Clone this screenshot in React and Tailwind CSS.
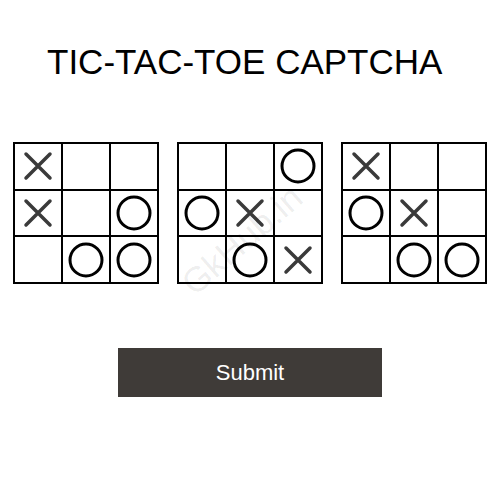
// Tic-tac-toe captcha: three boards and a submit button

const BOARDS = [
  ['x', '', '', 'x', '', 'o', '', 'o', 'o'],
  ['', '', 'o', 'o', 'x', '', '', 'o', 'x'],
  ['x', '', '', 'o', 'x', '', '', 'o', 'o'],
];

function Mark({ v }) {
  if (v === 'x') {
    return (
      <svg width="30" height="30" viewBox="0 0 30 30">
        <path d="M3 3 L27 27 M27 3 L3 27" stroke="#3a3a3a" strokeWidth="3.5" strokeLinecap="round" />
      </svg>
    );
  }
  if (v === 'o') {
    return (
      <svg width="36" height="36" viewBox="0 0 36 36">
        <circle cx="18" cy="18" r="16" fill="none" stroke="#000" strokeWidth="3" />
      </svg>
    );
  }
  return null;
}

function Board({ cells }) {
  return (
    <div className="w-[146px] h-[142px] bg-black p-[2px] grid grid-cols-3 grid-rows-3 gap-[2px]">
      {cells.map((v, i) => (
        <div key={i} className="bg-white flex items-center justify-center">
          <Mark v={v} />
        </div>
      ))}
    </div>
  );
}

export default function App() {
  return (
    <div className="relative w-[500px] h-[500px] bg-white overflow-hidden font-['Liberation_Sans',Arial,sans-serif]">
      <div className="pt-[44px] pl-[47px] text-[35px] leading-[36px] text-black">
        TIC-TAC-TOE CAPTCHA
      </div>

      <div className="mt-[62px] flex justify-center gap-[18px]">
        {BOARDS.map((b, i) => (
          <Board key={i} cells={b} />
        ))}
      </div>

      <div className="mt-[64px] flex justify-center">
        <button className="w-[264px] h-[49px] bg-[#3f3b38] text-white text-[22px] leading-none">
          Submit
        </button>
      </div>

      {/* watermark */}
      <div className="absolute left-[169px] top-[220px] w-[146px] text-center -rotate-[41deg] text-[35px] leading-[40px] text-black/[0.08] pointer-events-none select-none">
        GkHub.in
      </div>
    </div>
  );
}
